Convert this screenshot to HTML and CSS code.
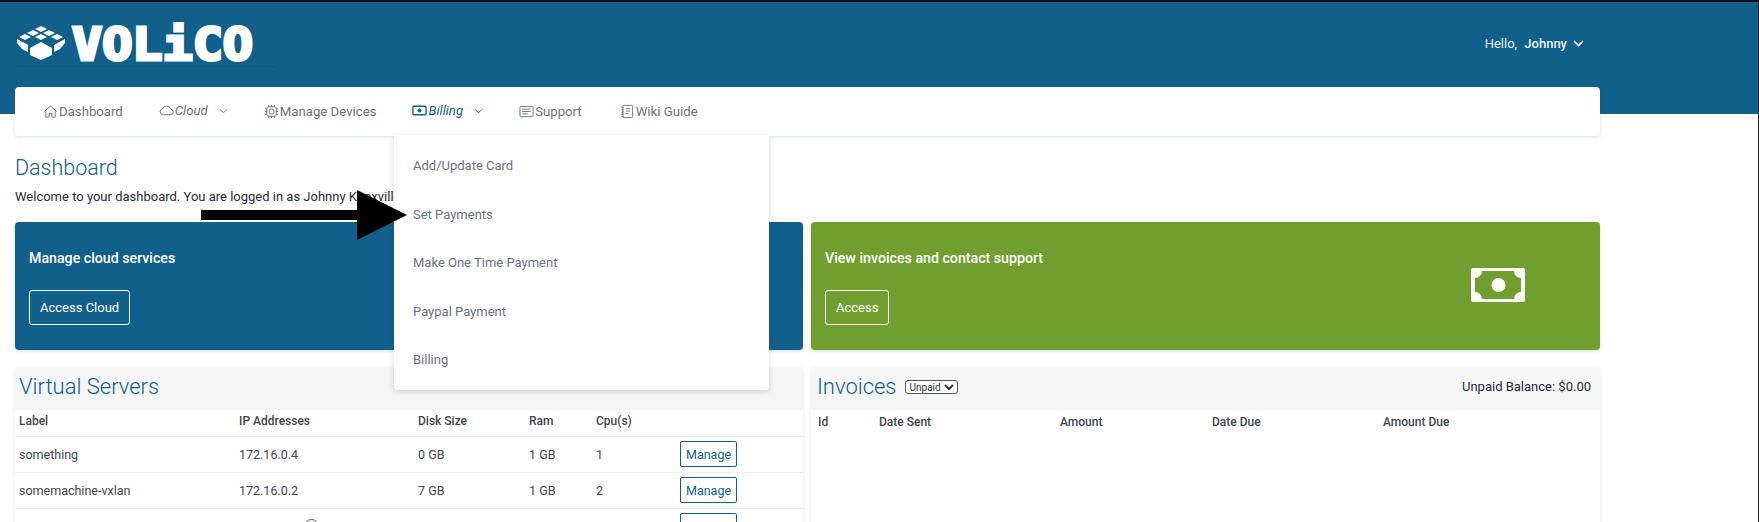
FILE: index.html
```html
<!DOCTYPE html>
<html>
<head>
  <meta charset="utf-8">
  <title>Dashboard</title>
  <link rel="stylesheet" href="styles.css">
</head>
<body>
  <header class="topbar">
    <div class="brand">
      <svg class="brand-mark" width="48" height="34" viewBox="0 0 48 34" fill="#fff">
        <polygon points="24,0 30,3 24,6 18,3"/>
        <polygon points="16,4 22,7 16,10 10,7"/>
        <polygon points="32,4 38,7 32,10 26,7"/>
        <polygon points="8,8 14,11 8,14 2,11"/>
        <polygon points="24,8 30,11 24,14 18,11"/>
        <polygon points="40,8 46,11 40,14 34,11"/>
        <polygon points="0,13 11,19 11,26 5,23 0,17"/>
        <polygon points="48,13 37,19 37,26 43,23 48,17"/>
        <polygon points="24,16 35,22 35,29 24,34 13,29 13,22"/>
      </svg>
      <svg class="brand-word" width="183" height="56" viewBox="0 0 183 56">
        <text x="1" y="44" textLength="181" lengthAdjust="spacingAndGlyphs">VOLiCO</text>
      </svg>
    </div>
    <div class="user">Hello, <b>Johnny</b>
      <svg width="11" height="7" viewBox="0 0 11 7" fill="none" stroke="#fff" stroke-width="1.6"><path d="M1 1l4.500 4.500L10 1"/></svg>
    </div>
  </header>

  <nav class="navbar">
    <a class="nav-item" href="#">
      <svg class="ico" viewBox="0 0 16 16"><path d="M1.500 8L8 2l6.500 6M3 7v7h3.500v-4h3v4H13V7"/></svg>Dashboard
    </a>
    <a class="nav-item em" href="#">
      <svg class="ico" viewBox="0 0 16 16"><path d="M4 12.500h8a3 3 0 0 0 .5-6A4.500 4.500 0 0 0 4 6a3.300 3.300 0 0 0 0 6.500z"/></svg>Cloud
      <svg class="chev" viewBox="0 0 10 6"><path d="M1 1l4 4 4-4"/></svg>
    </a>
    <a class="nav-item" href="#">
      <svg class="ico" viewBox="0 0 16 16"><rect x="3" y="3" width="10" height="10" rx="1.500"/><rect x="5.500" y="5.500" width="5" height="5" rx="1"/><path d="M5 1v2M8 1v2M11 1v2M5 13v2M8 13v2M11 13v2M1 5h2M1 8h2M1 11h2M13 5h2M13 8h2M13 11h2"/></svg>Manage Devices
    </a>
    <a class="nav-item em active" href="#">
      <svg class="ico" viewBox="0 0 16 16"><rect x="1" y="3.500" width="14" height="9" rx="1" stroke-width="1.500"/><circle cx="8" cy="8" r="1.700" fill="currentColor"/></svg>Billing
      <svg class="chev" viewBox="0 0 10 6"><path d="M1 1l4 4 4-4"/></svg>
    </a>
    <a class="nav-item" href="#">
      <svg class="ico" viewBox="0 0 16 16"><rect x="1" y="2.500" width="14" height="11" rx="1"/><path d="M3.500 5.500h9M3.500 8h9M3.500 10.500h6"/></svg>Support
    </a>
    <a class="nav-item" href="#">
      <svg class="ico" viewBox="0 0 16 16"><rect x="3" y="1.500" width="10.500" height="13" rx="1"/><path d="M6 5h5M6 7.500h5M6 10h3M1.500 3.500h2.500M1.500 6h2.500M1.500 8.500h2.500M1.500 11h2.500M1.500 13.500h2.500"/></svg>Wiki Guide
    </a>
  </nav>

  <main class="content">
    <h1 class="page-title">Dashboard</h1>
    <p class="welcome">Welcome to your dashboard. You are logged in as Johnny Knoxville</p>

    <div class="two-col">
      <section class="card card-blue">
        <div class="card-title">Manage cloud services</div>
        <a class="btn-ghost" href="#">Access Cloud</a>
      </section>
      <section class="card card-green">
        <div>
          <div class="card-title">View invoices and contact support</div>
          <a class="btn-ghost" href="#">Access</a>
        </div>
        <svg class="card-icon" width="54" height="34" viewBox="0 0 54 34">
          <path fill="#fff" fill-rule="evenodd" d="M2 0h50a2 2 0 0 1 2 2v30a2 2 0 0 1-2 2H2a2 2 0 0 1-2-2V2a2 2 0 0 1 2-2zM11 3a7 7 0 0 1-7 7v14a7 7 0 0 1 7 7h32a7 7 0 0 1 7-7V10a7 7 0 0 1-7-7z"/>
          <circle cx="27.500" cy="17" r="7" fill="#fff"/>
        </svg>
      </section>
    </div>

    <div class="two-col panels">
      <section class="panel">
        <div class="panel-head"><h2>Virtual Servers</h2></div>
        <table class="grid servers">
          <thead>
            <tr><th>Label</th><th>IP Addresses</th><th>Disk Size</th><th>Ram</th><th>Cpu(s)</th><th></th></tr>
          </thead>
          <tbody>
            <tr><td>something</td><td>172.16.0.4</td><td>0 GB</td><td>1 GB</td><td>1</td><td><a class="btn-line" href="#">Manage</a></td></tr>
            <tr><td>somemachine-vxlan</td><td>172.16.0.2</td><td>7 GB</td><td>1 GB</td><td>2</td><td><a class="btn-line" href="#">Manage</a></td></tr>
            <tr><td></td><td><svg class="row-info" width="15" height="15" viewBox="0 0 15 15" fill="none" stroke="#555"><circle cx="7.500" cy="7.500" r="7"/></svg></td><td></td><td></td><td></td><td><a class="btn-line" href="#">Manage</a></td></tr>
          </tbody>
        </table>
      </section>
      <section class="panel panel-invoices">
        <div class="panel-head">
          <h2>Invoices</h2>
          <select class="filter"><option>Unpaid</option></select>
          <span class="balance">Unpaid Balance: $0.00</span>
        </div>
        <table class="grid invoices">
          <thead>
            <tr><th>Id</th><th>Date Sent</th><th>Amount</th><th>Date Due</th><th>Amount Due</th></tr>
          </thead>
        </table>
      </section>
    </div>
  </main>

  <!-- open billing menu -->
  <ul class="dropdown">
    <li>Add/Update Card</li>
    <li>Set Payments</li>
    <li>Make One Time Payment</li>
    <li>Paypal Payment</li>
    <li>Billing</li>
  </ul>

  <!-- annotation drawn over the screenshot -->
  <svg class="arrow" width="208" height="52" viewBox="0 0 208 52">
    <polygon points="0,20 156,20 156,0 206,25 156,50 156,30 0,30"/>
  </svg>
</body>
</html>
```

FILE: styles.css
```css
* { box-sizing: border-box; }
html, body { height: 100%; }
body {
  margin: 0;
  overflow: hidden;
  position: relative;
  background: #fff;
  border-top: 2px solid #111;
  border-right: 1px solid #222;
  font-family: Roboto, "Noto Sans", sans-serif;
  font-size: 13px;
  color: #2c3a4b;
}
a { text-decoration: none; color: inherit; }

.topbar {
  height: 112px;
  background: #11608c;
  display: flex;
  justify-content: space-between;
  align-items: flex-start;
  padding: 24px 174px 0 17px;
  margin-bottom: -27px;
}
.brand {
  display: flex;
  align-items: flex-start;
  gap: 6px;
  width: 259px;
  height: 41px;
  border-bottom: 1px solid #0e5880;
}
.brand-mark { flex: none; }
.brand-word { flex: none; margin-top: -10px; }
.brand-word text {
  font-family: "DejaVu Sans Mono", monospace;
  font-weight: 700;
  font-size: 44px;
  fill: #fff;
  stroke: #fff;
  stroke-width: 3px;
}
.user {
  color: #e9f0f5;
  font-size: 13px;
  margin-top: 10px;
  display: flex;
  align-items: center;
  gap: 4px;
  white-space: pre;
}
.user b { font-weight: 500; }
.user svg { margin-left: 2px; }

.navbar {
  width: 1585px;
  height: 49px;
  margin: 0 0 0 15px;
  background: #fff;
  border-radius: 4px;
  box-shadow: 0 1px 4px rgba(40,50,60,.16);
  display: flex;
  align-items: center;
  padding-left: 28px;
  position: relative;
}
.nav-item {
  display: flex;
  align-items: center;
  color: #6b7280;
  font-size: 13.200px;
  margin-right: 36px;
  white-space: nowrap;
}
.nav-item:last-child { margin-left: 2px; }
.nav-item.em { font-style: italic; margin-bottom: 2px; }
.nav-item.active { color: #11608c; }
.ico {
  width: 15px;
  height: 15px;
  margin-right: 1px;
  fill: none;
  stroke: currentColor;
  stroke-width: 1;
}
.chev {
  width: 9px;
  height: 6px;
  margin-left: 11px;
  fill: none;
  stroke: currentColor;
  stroke-width: 1;
}

.content { padding: 0 158px 0 15px; }
.page-title {
  margin: 18px 0 0;
  font-size: 21.500px;
  line-height: 27px;
  font-weight: 300;
  color: #11608c;
}
.welcome {
  margin: 7px 0 0;
  line-height: 18px;
  color: #1f2d3d;
}

.two-col {
  display: grid;
  grid-template-columns: 788px 789px;
  gap: 8px;
  margin-top: 16px;
}
.panels { margin-top: 18px; }

.card {
  height: 128px;
  border-radius: 4px;
  padding: 26px 14px 0;
  color: #fff;
  box-shadow: 0 1px 3px rgba(40,50,60,.2);
}
.card-blue { background: #11608c; }
.card-green {
  background: #709f30;
  display: flex;
  justify-content: space-between;
}
.card-title {
  font-size: 14.200px;
  font-weight: 500;
  line-height: 20px;
}
.card-icon { margin: 20px 61px 0 0; }
.btn-ghost {
  display: inline-block;
  margin-top: 22px;
  padding: 0 10px;
  height: 35px;
  line-height: 33px;
  border: 1px solid #fff;
  border-radius: 3px;
  color: #fff;
}

.panel {
  background: #fff;
  border-radius: 4px;
  box-shadow: 0 0 3px rgba(40,50,60,.12);
  height: 300px;
}
.panel-head {
  height: 42px;
  background: #f5f5f5;
  display: flex;
  align-items: center;
  padding: 0 9px 5px 4px;
  border-radius: 4px 4px 0 0;
}
.panel-invoices .panel-head { padding-left: 6px; }
.panel-head h2 {
  margin: 0;
  font-size: 22px;
  font-weight: 300;
  color: #11608c;
}
.filter {
  margin-left: 8px;
  width: 53px;
  height: 14px;
  padding: 0;
  font-size: 10px;
  font-family: inherit;
  background: #fff;
  border: 1px solid #555;
  border-radius: 3px;
  color: #333;
}
.balance { margin-left: auto; color: #1f2d3d; }

.grid {
  width: 100%;
  border-collapse: collapse;
  table-layout: fixed;
  font-size: 12.500px;
  color: #3e4650;
}
.grid th {
  text-align: left;
  font-size: 12px;
  font-weight: 500;
  height: 26px;
  padding: 0 0 3px 4px;
  border-bottom: 1px solid #eee;
}
.grid td {
  height: 36px;
  padding: 0 0 0 4px;
  border-bottom: 1px solid #eee;
}
.invoices th { border-bottom: 0; padding-left: 7px; }
.servers th:nth-child(1) { width: 220px; }
.servers th:nth-child(2) { width: 179px; }
.servers th:nth-child(3) { width: 111px; }
.servers th:nth-child(4) { width: 67px; }
.servers th:nth-child(5) { width: 84px; }
.invoices th:nth-child(1) { width: 61px; }
.invoices th:nth-child(2) { width: 181px; }
.invoices th:nth-child(3) { width: 152px; }
.invoices th:nth-child(4) { width: 171px; }
.row-info { display: block; margin-left: 65px; }
.btn-line {
  display: inline-block;
  width: 57px;
  height: 26px;
  line-height: 26px;
  text-align: center;
  border: 1px solid #11608c;
  border-radius: 2px;
  color: #11608c;
  vertical-align: middle;
}

.dropdown {
  position: absolute;
  left: 394px;
  top: 133px;
  width: 375px;
  height: 255px;
  margin: 0;
  padding: 7px 0 0 19px;
  list-style: none;
  background: #fff;
  border-radius: 0 0 4px 4px;
  box-shadow: 0 2px 6px rgba(40,50,60,.18);
  color: #6b7280;
  font-size: 13px;
}
.dropdown li { height: 48.500px; line-height: 48.500px; }

.arrow {
  position: absolute;
  left: 201px;
  top: 188px;
  fill: #000;
}
```
